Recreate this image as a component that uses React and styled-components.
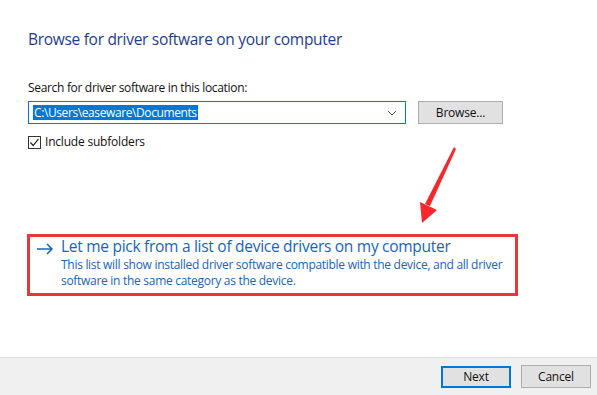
import React from 'react';
import styled, { createGlobalStyle } from 'styled-components';

const GlobalStyle = createGlobalStyle`
  html, body {
    margin: 0;
    padding: 0;
    background: #ffffff;
  }
  body {
    font-family: "Open Sans", "Noto Sans", "Liberation Sans", sans-serif;
  }
`;

const App = () => {
  return (
    <Window>
      <GlobalStyle />
      <Content>
        <Title>Browse for driver software on your computer</Title>
        <Label>Search for driver software in this location:</Label>
        <PathRow>
          <Combo>
            <Selected>C:\Users\easeware\Documents</Selected>
            <Chevron viewBox="0 0 10 6">
              <path d="M1 1 L5 5 L9 1" fill="none" stroke="#555" strokeWidth="1" />
            </Chevron>
          </Combo>
          <Button width="85px">Browse...</Button>
        </PathRow>
        <CheckRow>
          <CheckBox>
            <svg width="11" height="11" viewBox="0 0 11 11">
              <path d="M1.5 5.5 L4.2 8.5 L9.5 1.8" fill="none" stroke="#222" strokeWidth="1.2" />
            </svg>
          </CheckBox>
          <CheckLabel>Include subfolders</CheckLabel>
        </CheckRow>

        <CommandLink>
          <LinkArrow viewBox="0 0 18 12">
            <path d="M1 6 H16 M11 1 L16 6 L11 11" fill="none" stroke="#1565c0" strokeWidth="1.5" />
          </LinkArrow>
          <LinkBody>
            <LinkTitle>Let me pick from a list of device drivers on my computer</LinkTitle>
            <LinkNote>
              This list will show installed driver software compatible with the device, and all driver<br />
              software in the same category as the device.
            </LinkNote>
          </LinkBody>
        </CommandLink>
      </Content>

      <Footer>
        <Button width="70px" primary>Next</Button>
        <Button width="70px">Cancel</Button>
      </Footer>

      {/* annotation arrow drawn over the dialog */}
      <Pointer width="597" height="395" viewBox="0 0 597 395">
        <polygon points="454,147 456,149 430,206 425,204" fill="#f4282d" />
        <polygon points="420,202 437,210 422,223" fill="#f4282d" />
      </Pointer>
    </Window>
  );
};

// === Styled Components ===

const Window = styled.div`
  position: relative;
  width: 597px;
  height: 395px;
  display: flex;
  flex-direction: column;
  background: #ffffff;
  overflow: hidden;
`;

const Content = styled.div`
  flex: 1;
  padding: 29px 0 0 28px;
`;

const Title = styled.h1`
  margin: 0;
  font-size: 15.5px;
  font-weight: 400;
  line-height: 21px;
  color: #1e3c91;
  letter-spacing: -0.3px;
`;

const Label = styled.div`
  margin-top: 30px;
  font-size: 12px;
  line-height: 16px;
  color: #111;
  letter-spacing: -0.32px;
`;

const PathRow = styled.div`
  display: flex;
  align-items: center;
  gap: 12px;
  margin-top: 5px;
`;

const Combo = styled.div`
  box-sizing: border-box;
  width: 378px;
  height: 23px;
  border: 1px solid #0078d7;
  display: flex;
  align-items: center;
  justify-content: space-between;
  padding: 0 8px 0 4px;
`;

const Selected = styled.span`
  background: #0078d7;
  color: #ffffff;
  font-size: 12px;
  line-height: 15px;
  padding: 0 1px;
  letter-spacing: -0.4px;
`;

const Chevron = styled.svg`
  width: 10px;
  height: 6px;
`;

const Button = styled.button`
  box-sizing: border-box;
  width: ${p => p.width};
  height: ${p => (p.primary ? '22px' : '23px')};
  background: #e1e1e1;
  border: ${p => (p.primary ? '2px solid #0078d7' : '1px solid #adadad')};
  font-family: inherit;
  font-size: 12px;
  color: #111;
  padding: 0;
  letter-spacing: -0.2px;
`;

const CheckRow = styled.div`
  display: flex;
  align-items: center;
  gap: 4px;
  margin-top: 10px;
`;

const CheckBox = styled.span`
  box-sizing: border-box;
  width: 13px;
  height: 13px;
  border: 1px solid #333;
  display: flex;
  align-items: center;
  justify-content: center;
`;

const CheckLabel = styled.span`
  font-size: 12px;
  line-height: 16px;
  color: #111;
  letter-spacing: -0.2px;
`;

const CommandLink = styled.div`
  box-sizing: border-box;
  width: 491px;
  height: 62px;
  margin: 84px 0 0 -1px;
  border: 3px solid #e8373c;
  display: flex;
  align-items: flex-start;
  gap: 7px;
  padding: 0 0 0 6px;
`;

const LinkArrow = styled.svg`
  width: 18px;
  height: 12px;
  margin-top: 6px;
  flex-shrink: 0;
`;

const LinkBody = styled.div`
  display: flex;
  flex-direction: column;
  margin-top: -1px;
`;

const LinkTitle = styled.div`
  font-size: 15.5px;
  line-height: 21px;
  color: #1565c0;
  letter-spacing: -0.28px;
`;

const LinkNote = styled.div`
  font-size: 12px;
  line-height: 16px;
  color: #1565c0;
  letter-spacing: -0.29px;
`;

const Footer = styled.div`
  height: 38px;
  box-sizing: border-box;
  border-top: 1px solid #dfdfdf;
  background: #f0f0f0;
  display: flex;
  align-items: center;
  justify-content: flex-end;
  gap: 10px;
  padding: 0 6px 0 0;
`;

const Pointer = styled.svg`
  position: absolute;
  left: 0;
  top: 0;
  pointer-events: none;
`;

export default App;
